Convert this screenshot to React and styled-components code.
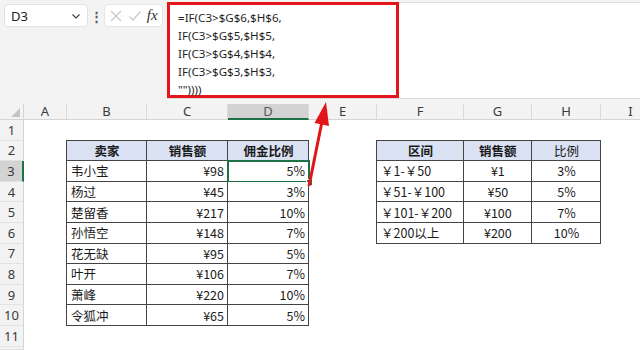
import React from 'react';
import styled, { createGlobalStyle } from 'styled-components';

const GlobalStyle = createGlobalStyle`
  html, body {
    margin: 0;
    padding: 0;
    background: #ffffff;
    overflow: hidden;
  }
  body {
    font-family: "Noto Sans", "Noto Sans CJK SC", sans-serif;
    color: #1b1b1b;
  }
`;

const COLS = [
  { name: 'A', w: 43 },
  { name: 'B', w: 80 },
  { name: 'C', w: 81 },
  { name: 'D', w: 81 },
  { name: 'E', w: 68 },
  { name: 'F', w: 87 },
  { name: 'G', w: 68 },
  { name: 'H', w: 69 },
  { name: 'I', w: 60 },
];

const ROWS = [1, 2, 3, 4, 5, 6, 7, 8, 9, 10, 11];

const sellers = [
  ['韦小宝', '¥98', '5%'],
  ['杨过', '¥45', '3%'],
  ['楚留香', '¥217', '10%'],
  ['孙悟空', '¥148', '7%'],
  ['花无缺', '¥95', '5%'],
  ['叶开', '¥106', '7%'],
  ['萧峰', '¥220', '10%'],
  ['令狐冲', '¥65', '5%'],
];

const ranges = [
  ['￥1-￥50', '¥1', '3%'],
  ['￥51-￥100', '¥50', '5%'],
  ['￥101-￥200', '¥100', '7%'],
  ['￥200以上', '¥200', '10%'],
];

const formula = [
  '=IF(C3>$G$6,$H$6,',
  'IF(C3>$G$5,$H$5,',
  'IF(C3>$G$4,$H$4,',
  'IF(C3>$G$3,$H$3,',
  '""))))',
];

const Page = styled.div`
  position: relative;
  width: 640px;
  height: 350px;
  overflow: hidden;
  display: flex;
  flex-direction: column;
`;

/* ---------- formula bar ---------- */

const FormulaBar = styled.div`
  height: 104px;
  flex: none;
  background: #f3f3f3;
  display: flex;
  align-items: flex-start;
  padding: 2px 0 0 4px;
  box-sizing: border-box;
`;

const NameBox = styled.div`
  width: 84px;
  height: 23px;
  margin-top: 2px;
  box-sizing: border-box;
  background: #fff;
  border: 1px solid #e2e2e2;
  border-radius: 4px;
  display: flex;
  align-items: center;
  justify-content: space-between;
  padding: 0 6px 0 6px;
  font-size: 13px;
  color: #222;
`;

const Dots = styled.div`
  width: 16px;
  height: 23px;
  margin-top: 2px;
  display: flex;
  align-items: center;
  justify-content: center;
  color: #555;
  font-size: 13px;
  font-weight: bold;
`;

const EditButtons = styled.div`
  width: 59px;
  height: 23px;
  margin-top: 2px;
  box-sizing: border-box;
  background: #fff;
  border: 1px solid #e6e6e6;
  border-radius: 4px;
  display: flex;
  align-items: center;
  justify-content: space-around;
  padding: 0 2px;
`;

const Fx = styled.span`
  font-family: "Liberation Serif", serif;
  font-style: italic;
  font-size: 15px;
  color: #333;
`;

const FormulaBox = styled.div`
  flex: 1;
  height: 97px;
  margin-left: 4px;
  background: #fff;
  border-top: 1px solid #dedede;
  border-bottom: 1px solid #dedede;
  box-sizing: border-box;
  display: flex;
`;

const FormulaText = styled.div`
  width: 232px;
  height: 96px;
  margin-top: -1px;
  box-sizing: border-box;
  border: 3px solid #e2151b;
  padding: 4px 0 0 8px;
  font-family: "Noto Sans", sans-serif;
  font-size: 11.6px;
  line-height: 18px;
  color: #1f1f1f;
  white-space: pre;
`;

/* ---------- sheet ---------- */

const Sheet = styled.div`
  flex: 1;
  display: grid;
  grid-template-columns: 24px ${COLS.map((c) => c.w + 'px').join(' ')};
  grid-template-rows: 16px repeat(${ROWS.length}, 20.6px) 1fr;
  background: #fff;
`;

const Corner = styled.div`
  grid-column: 1;
  grid-row: 1;
  background: #f3f3f3;
  border-bottom: 1px solid #d4d4d4;
  border-right: 1px solid #d4d4d4;
  box-sizing: border-box;
  position: relative;
  &::after {
    content: '';
    position: absolute;
    right: 3px;
    bottom: 2px;
    border-left: 9px solid transparent;
    border-bottom: 9px solid #c4c4c4;
  }
`;

const ColHead = styled.div`
  grid-row: 1;
  grid-column: ${(p) => p.$col};
  background: ${(p) => (p.$active ? '#d3d3d3' : '#f3f3f3')};
  border-right: 1px solid #d9d9d9;
  border-bottom: ${(p) => (p.$active ? '2px solid #1e7145' : '1px solid #d4d4d4')};
  box-sizing: border-box;
  display: flex;
  align-items: center;
  justify-content: center;
  font-size: 13px;
  color: ${(p) => (p.$active ? '#555' : '#3a3a3a')};
  line-height: 1;
`;

const RowHead = styled.div`
  grid-column: 1;
  grid-row: ${(p) => p.$row + 1};
  background: ${(p) => (p.$active ? '#d3d3d3' : '#f3f3f3')};
  border-right: ${(p) => (p.$active ? '2px solid #1e7145' : '1px solid #d4d4d4')};
  border-bottom: 1px solid #e2e2e2;
  box-sizing: border-box;
  display: flex;
  align-items: center;
  justify-content: center;
  font-size: 13px;
  color: #3a3a3a;
`;

const Table = styled.div`
  grid-column: ${(p) => p.$col} / span ${(p) => p.$span};
  grid-row: 3 / span ${(p) => p.$rows};
  display: grid;
  grid-template-columns: ${(p) => p.$widths.map((w) => w + 'fr').join(' ')};
  grid-template-rows: repeat(${(p) => p.$rows}, 1fr);
  gap: 1px;
  padding: 1px;
  margin: -1px 0 0 -1px;
  background: #444;
`;

const Cell = styled.div`
  position: relative;
  background: ${(p) => (p.$head ? '#d9e1f2' : '#fff')};
  display: flex;
  align-items: center;
  justify-content: ${(p) =>
    p.$align === 'right' ? 'flex-end' : p.$align === 'center' ? 'center' : 'flex-start'};
  padding: 0 3px 0 4px;
  font-family: "Noto Sans CJK SC", "Noto Sans", sans-serif;
  font-size: 12.5px;
  font-weight: ${(p) => (p.$bold ? 700 : 400)};
  color: #1a1a1a;
  white-space: nowrap;
  overflow: visible;
`;

const Selection = styled.div`
  position: absolute;
  inset: -1px -2px -2px -1px;
  border: 2px solid #1e7145;
  pointer-events: none;
  &::after {
    content: '';
    position: absolute;
    right: -5px;
    bottom: -5px;
    width: 5px;
    height: 5px;
    background: #1e7145;
    border: 1px solid #fff;
  }
`;

const Arrow = styled.svg`
  position: absolute;
  left: 300px;
  top: 95px;
  width: 40px;
  height: 100px;
  overflow: visible;
  pointer-events: none;
`;

const Chevron = () => (
  <svg width="10" height="10" viewBox="0 0 10 10">
    <path d="M1.5 3.5 L5 7 L8.5 3.5" fill="none" stroke="#444" strokeWidth="1.2" />
  </svg>
);

const Cross = () => (
  <svg width="14" height="14" viewBox="0 0 14 14">
    <path d="M2 2 L12 12 M12 2 L2 12" stroke="#c8c8c8" strokeWidth="1.2" />
  </svg>
);

const Check = () => (
  <svg width="14" height="14" viewBox="0 0 14 14">
    <path d="M1.5 7.5 L5 11 L12.5 2.5" fill="none" stroke="#c8c8c8" strokeWidth="1.2" />
  </svg>
);

const App = () => {
  return (
    <Page>
      <GlobalStyle />
      <FormulaBar>
        <NameBox>
          <span>D3</span>
          <Chevron />
        </NameBox>
        <Dots>⋮</Dots>
        <EditButtons>
          <Cross />
          <Check />
          <Fx>fx</Fx>
        </EditButtons>
        <FormulaBox>
          <FormulaText>{formula.join('\n')}</FormulaText>
        </FormulaBox>
      </FormulaBar>

      <Sheet>
        <Corner />
        {COLS.map((c, i) => (
          <ColHead key={c.name} $col={i + 2} $active={c.name === 'D'}>
            {c.name}
          </ColHead>
        ))}
        {ROWS.map((r) => (
          <RowHead key={r} $row={r} $active={r === 3}>
            {r}
          </RowHead>
        ))}
        <RowHead $row={ROWS.length + 1} />

        <Table $col={3} $span={3} $rows={9} $widths={[80, 81, 81]}>
          <Cell $head $bold $align="center">卖家</Cell>
          <Cell $head $bold $align="center">销售额</Cell>
          <Cell $head $bold $align="center">佣金比例</Cell>
          {sellers.map(([name, amount, rate], i) => (
            <React.Fragment key={name}>
              <Cell>{name}</Cell>
              <Cell $align="right">{amount}</Cell>
              <Cell $align="right">
                {rate}
                {i === 0 && <Selection />}
              </Cell>
            </React.Fragment>
          ))}
        </Table>

        <Table $col={7} $span={3} $rows={5} $widths={[87, 68, 69]}>
          <Cell $head $bold $align="center">区间</Cell>
          <Cell $head $bold $align="center">销售额</Cell>
          <Cell $head $align="center">比例</Cell>
          {ranges.map(([range, amount, rate]) => (
            <React.Fragment key={range}>
              <Cell>{range}</Cell>
              <Cell $align="center">{amount}</Cell>
              <Cell $align="center">{rate}</Cell>
            </React.Fragment>
          ))}
        </Table>
      </Sheet>

      <Arrow viewBox="0 0 40 100">
        <line x1="9" y1="91" x2="22.5" y2="24" stroke="#e2151b" strokeWidth="3" />
        <polygon points="26,7 29,31 14.5,28" fill="#e2151b" />
      </Arrow>
    </Page>
  );
};

export default App;
